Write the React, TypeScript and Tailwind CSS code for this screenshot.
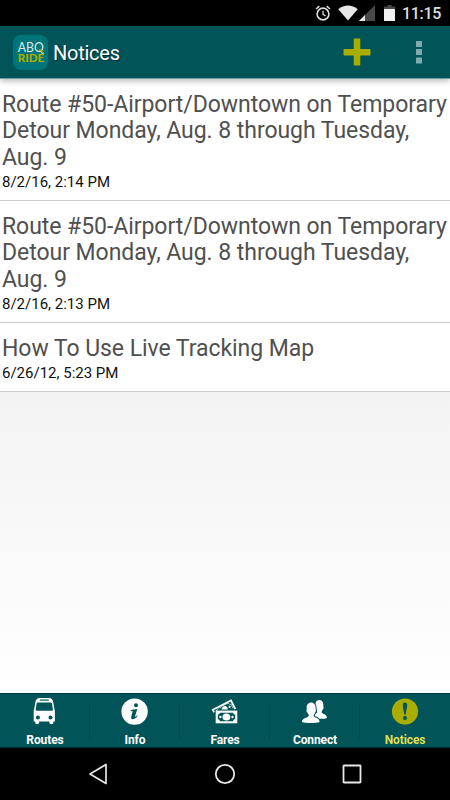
import type { ReactNode } from "react";

const notices = [
  {
    title: "Route #50-Airport/Downtown on Temporary Detour Monday, Aug. 8 through Tuesday, Aug. 9",
    date: "8/2/16, 2:14 PM",
  },
  {
    title: "Route #50-Airport/Downtown on Temporary Detour Monday, Aug. 8 through Tuesday, Aug. 9",
    date: "8/2/16, 2:13 PM",
  },
  { title: "How To Use Live Tracking Map", date: "6/26/12, 5:23 PM" },
];

const StatusBar = () => (
  <div className="flex h-[26px] shrink-0 items-center justify-end bg-black pr-[9px] text-[#dedede]">
    <svg width="16" height="16" viewBox="0 0 16 16" fill="none" stroke="currentColor" className="mr-[7px]">
      <circle cx="8" cy="9" r="5.9" strokeWidth="1.6" />
      <path d="M8 5.7V9.4L10.5 11" strokeWidth="1.3" />
      <path d="M1 4L4.3 1.2M11.7 1.2L15 4" strokeWidth="1.6" />
    </svg>
    <svg width="20" height="16" viewBox="0 0 20 16" className="mr-px">
      <path d="M0.3 4.3C6 -0.7 14 -0.7 19.7 4.3L10 15.6Z" fill="#e8e8e8" />
    </svg>
    <svg width="16" height="16" viewBox="0 0 16 16" className="mr-[9px]">
      <path d="M0 16L16 0V16Z" fill="#484848" />
      <path d="M0 16L6 10V16Z" fill="#e8e8e8" />
    </svg>
    <svg width="11" height="16" viewBox="0 0 11 16" className="mr-[7px]">
      <path d="M3.5 0H7.5V1.5H11V16H0V1.5H3.5Z" fill="#484848" />
      <path d="M0 4H11V16H0Z" fill="#f0f0f0" />
    </svg>
    <span className="mt-0.5 text-[16px] font-medium leading-none tracking-[-0.3px]">11:15</span>
  </div>
);

const Logo = () => (
  <div className="size-[35px] rounded-[8px] bg-[#007579]">
    <svg width="35" height="35" viewBox="0 0 35 35" className="overflow-visible">
      <text x="4.7" y="17" fill="#dceced" fontFamily="Lato" fontSize="12.4" textLength="26" lengthAdjust="spacingAndGlyphs">
        ABQ
      </text>
      <path d="M26.5 14.5L30.5 18" stroke="#a8ad00" strokeWidth="1.6" />
      <text x="4.7" y="27" fill="#a8ad00" fontFamily="Lato" fontWeight="900" fontSize="10.8" textLength="26.5" lengthAdjust="spacingAndGlyphs">
        RIDE
      </text>
    </svg>
  </div>
);

const Header = () => (
  <header className="z-10 flex h-[53px] shrink-0 items-center border-b border-[#6f9fa2] bg-[#015458] pl-[13px] shadow-[0_2px_6px_rgba(0,0,0,0.28)]">
    <Logo />
    <h1 className="ml-[5px] mt-0.5 flex-1 text-[20px] tracking-[-0.25px] text-white [text-shadow:1px_1px_1px_#002d30]">Notices</h1>
    <svg width="28" height="28" viewBox="0 0 28 28" fill="#a8ad00">
      <rect x="0.5" y="11" width="27" height="6.5" rx="1" />
      <rect x="10.7" y="0.5" width="6.6" height="27" rx="1" />
    </svg>
    <svg width="6" height="24" viewBox="0 0 6 24" fill="#80aaac" className="ml-[45px] mr-7">
      <path d="M0 1H6V7H0ZM0 9H6V15H0ZM0 17.5H6V23.5H0Z" />
    </svg>
  </header>
);

const BusIcon = () => (
  <svg width="28" height="28" viewBox="0 0 28 28">
    <path
      d="M4.4 5.2C4.6 3 6 1.2 9 1.1H17.6C20.6 1.2 22 3 22.2 5.2L23.3 11.5C23.8 13 23.9 14 23.9 16V24.4H22.4V25.6C22.4 27.9 18.4 27.9 18.4 25.6V24.4H8.2V25.6C8.2 27.9 4.2 27.9 4.2 25.6V24.4H2.7V16C2.7 14 2.8 13 3.3 11.5Z"
      fill="white"
    />
    <path d="M9 3.1H17.8" stroke="#015458" strokeWidth="1.2" />
    <path d="M7 5.6H19.6C20.4 5.6 20.8 6 21 6.8L21.9 12.2C22 13.3 21.6 13.8 20.6 13.8H6C5 13.8 4.6 13.3 4.7 12.2L5.6 6.8C5.8 6 6.2 5.6 7 5.6Z" fill="#015458" />
    <circle cx="6.9" cy="20.6" r="2" fill="#015458" />
    <circle cx="19.5" cy="20.6" r="2" fill="#015458" />
  </svg>
);

const InfoIcon = () => (
  <svg width="28" height="28" viewBox="0 0 28 28">
    <circle cx="13.6" cy="14.6" r="13.2" fill="white" />
    <circle cx="15" cy="8.3" r="2" fill="#015458" />
    <path d="M9.7 12.9Q12.5 12.7 16.3 12.1L13.9 19.8Q14.5 20.1 16.1 18.2L16.7 18.7C14.7 22.1 10.7 23.4 10.2 20.9C10 19.9 11.2 16.4 11.7 14.3L9.6 13.8Z" fill="#015458" />
  </svg>
);

const FaresIcon = () => (
  <svg width="28" height="28" viewBox="0 0 28 28">
    <path d="M3.2 15.3L1.7 12.8L20 3.5L24.4 12.2" fill="none" stroke="white" strokeWidth="1.7" />
    <path d="M5.2 14.2L7.3 10.8Q10.3 11.1 11.2 9L17 6.1Q18.5 7.8 20.2 7.3L22 11.5" fill="none" stroke="white" strokeWidth="0.7" />
    <path d="M10.5 12.6Q11.5 8.6 15 9.2Q17 9.8 16.8 12.6Z" fill="white" />
    <circle cx="18.6" cy="9.8" r="1.1" fill="white" />
    <rect x="4.7" y="13.6" width="21.6" height="12.7" fill="white" />
    <path d="M9 15.7H22Q22.2 17.4 24.2 17.7V22.1Q22.2 22.5 22 24.2H9Q8.7 22.5 6.8 22.1V17.7Q8.7 17.4 9 15.7Z" fill="#015458" />
    <ellipse cx="15.4" cy="20" rx="3.9" ry="3.5" fill="white" />
    <circle cx="9.4" cy="20" r="1.2" fill="white" />
    <circle cx="21.5" cy="20" r="1.2" fill="white" />
  </svg>
);

const ConnectIcon = () => {
  const person =
    "M0.8 24C0.8 19.8 7.3 19.6 7.6 17.8C7.7 16.8 6.7 16.3 6.2 14.6C5.1 14.3 5 11.8 5.6 11.3C4 2.4 15.6 2.4 14.4 11.3C15.1 12 14.7 14.3 13.9 14.6C13.3 16.4 12.3 16.9 12.4 17.9C12.7 19.8 18.4 19.7 18.4 24C15 25.4 4 25.4 0.8 24Z";
  return (
    <svg width="28" height="28" viewBox="0 0 28 28">
      <path d={person} fill="white" transform="translate(9.5 -1.2) scale(0.89 0.92)" />
      <path d={person} fill="white" stroke="#015458" strokeWidth="2" transform="translate(0.2 0.9)" className="[paint-order:stroke]" />
    </svg>
  );
};

const NoticesIcon = () => (
  <svg width="28" height="28" viewBox="0 0 28 28">
    <circle cx="14" cy="14.6" r="13.1" fill="#a8ad00" />
    <path d="M11.8 8C11.8 4.8 16.2 4.8 16.2 8C16.2 10.9 15.1 13.2 14.6 17.8H13.4C12.9 13.2 11.8 10.9 11.8 8Z" fill="#015458" />
    <circle cx="14" cy="21" r="2" fill="#015458" />
  </svg>
);

const Tab = ({ label, icon, active = false }: { label: string; icon: ReactNode; active?: boolean }) => (
  <div className="flex w-[90px] shrink-0 flex-col items-center pt-[3px]">
    {icon}
    <span className={`mt-2 text-[12px] font-bold leading-[14px] tracking-[-0.1px] ${active ? "text-[#dfdf50]" : "text-white"}`}>
      {label}
    </span>
  </div>
);

const Divider = () => <div className="-ml-px mt-[9px] h-9 w-px shrink-0 bg-[#004a4e]" />;

export default function App() {
  return (
    <div className="flex h-[800px] w-[450px] flex-col overflow-hidden bg-white font-['Roboto',sans-serif]">
      <StatusBar />
      <Header />

      <main className="flex min-h-0 flex-1 flex-col">
        {notices.map((notice) => (
          <div key={notice.date} className="border-b border-[#cdcdcd] bg-white pb-[8.5px] pl-0.5 pt-[12.5px]">
            <h2 className="text-[23px] leading-[26.5px] tracking-[-0.05px] text-[#505050]">{notice.title}</h2>
            <p className="mt-[1.5px] text-[15px] leading-[19px] text-[#111]">{notice.date}</p>
          </div>
        ))}
        <div className="flex-1 bg-linear-to-b from-[#f3f3f3] to-white" />
      </main>

      <nav className="flex h-[55px] shrink-0 border-b border-t border-[#00363b] bg-[#015458]">
        <Tab label="Routes" icon={<BusIcon />} />
        <Divider />
        <Tab label="Info" icon={<InfoIcon />} />
        <Divider />
        <Tab label="Fares" icon={<FaresIcon />} />
        <Divider />
        <Tab label="Connect" icon={<ConnectIcon />} />
        <Divider />
        <Tab label="Notices" icon={<NoticesIcon />} active />
      </nav>

      {/* Android system buttons */}
      <div className="flex h-[52px] shrink-0 items-center bg-black pl-[88px]">
        <svg width="20" height="22" viewBox="0 0 20 22" fill="none" stroke="#e8e8e8" strokeWidth="1.7">
          <path d="M18 1.5V20.5L2 11Z" strokeLinejoin="round" />
        </svg>
        <svg width="22" height="22" viewBox="0 0 22 22" fill="none" stroke="#e8e8e8" strokeWidth="1.8" className="ml-[106px]">
          <circle cx="11" cy="11" r="9.2" />
        </svg>
        <svg width="20" height="20" viewBox="0 0 20 20" fill="none" stroke="#e8e8e8" strokeWidth="1.8" className="ml-[106px]">
          <rect x="1.5" y="1.5" width="17" height="17" rx="0.5" />
        </svg>
      </div>
    </div>
  );
}
